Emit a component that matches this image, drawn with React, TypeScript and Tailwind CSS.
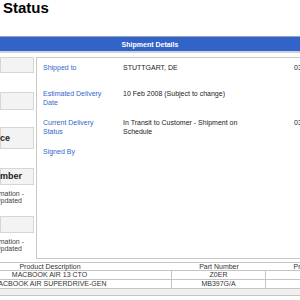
export default function App() {
  const label = "text-[#3366cc]";
  return (
    <div className="w-[300px] h-[300px] overflow-hidden bg-white text-[#222] font-['Liberation_Sans',Arial,sans-serif] text-[7px] leading-[9px]">
      <div className="h-[36px] pl-[3px] text-[15px] leading-[15px] font-bold text-black">Status</div>
      <div className="border-t border-[#9aa3b5] bg-[#3263c8] h-[15px] flex items-center justify-center text-white font-bold text-[7px]">
        Shipment Details
      </div>
      <div className="h-[2px] bg-[#d0d0d0]" />
      <div className="flex mt-[4px] gap-[2px]">
        <div className="w-[34px] shrink-0 flex flex-col">
          <div className="h-[16px] border border-[#d6d6d6] bg-[#f3f3f3]" />
          <div className="h-[18px] mt-[19px] border border-[#d6d6d6] bg-[#f3f3f3]" />
          <div className="h-[22px] mt-[17px] border border-[#d6d6d6] bg-[#f3f3f3] flex items-center justify-end pr-[23px] font-bold text-[9px] whitespace-nowrap">
            Reference
          </div>
          <div className="h-[17px] mt-[19px] border border-[#d6d6d6] bg-[#f3f3f3] flex items-center justify-end pr-[11px] font-bold text-[9px] whitespace-nowrap">
            Order Number
          </div>
          <div className="mt-[5px] flex flex-col items-end pr-[10px] text-[#444] leading-[7px] whitespace-nowrap">
            <span>Information -</span>
            <span className="pr-[2px]">Updated</span>
          </div>
          <div className="h-[17px] mt-[12px] border border-[#d6d6d6] bg-[#f3f3f3]" />
          <div className="mt-[5px] flex flex-col items-end pr-[10px] text-[#444] leading-[7px] whitespace-nowrap">
            <span>Information -</span>
            <span className="pr-[2px]">Updated</span>
          </div>
        </div>
        <div className="flex-1 -mr-[60px] h-[202px] border border-[#c9c9c9] pl-[6px] pt-[5px]">
          <div className="grid grid-cols-[80px_171px_1fr] h-[26px]">
            <div className={label}>Shipped to</div>
            <div>STUTTGART, DE</div>
            <div>03/02/2008</div>
          </div>
          <div className="grid grid-cols-[80px_171px_1fr] h-[29px]">
            <div className={label}>Estimated Delivery<br />Date</div>
            <div>10 Feb 2008 (Subject to change)</div>
            <div />
          </div>
          <div className="grid grid-cols-[80px_171px_1fr] h-[29px]">
            <div className={label}>Current Delivery<br />Status</div>
            <div>In Transit to Customer - Shipment on<br />Schedule</div>
            <div>03/02/2008</div>
          </div>
          <div className="grid grid-cols-[80px_171px_1fr]">
            <div className={label}>Signed By</div>
            <div />
            <div />
          </div>
        </div>
      </div>
      <div className="mt-[3px] ml-[-72px] w-[450px] text-[#333] leading-[8px]">
        <div className="grid grid-cols-[244px_94px_101px] border-t border-b border-[#c4c4c4] h-[9px] items-center text-center">
          <div>Product Description</div>
          <div>Part Number</div>
          <div>Product Status</div>
        </div>
        <div className="grid grid-cols-[244px_94px_101px] border-b border-[#c4c4c4] h-[9px] items-center text-center">
          <div className="border-r border-[#c4c4c4] h-full">MACBOOK AIR 13 CTO</div>
          <div className="border-r border-[#c4c4c4] h-full">Z0ER</div>
          <div className="h-full" />
        </div>
        <div className="grid grid-cols-[244px_94px_101px] border-b border-[#c4c4c4] h-[9px] items-center text-center">
          <div className="border-r border-[#c4c4c4] h-full">MACBOOK AIR SUPERDRIVE-GEN</div>
          <div className="border-r border-[#c4c4c4] h-full">MB397G/A</div>
          <div className="h-full" />
        </div>
        <div className="h-[7px] bg-[#f0f0f0] border-b border-[#c4c4c4]" />
      </div>
    </div>
  );
}
